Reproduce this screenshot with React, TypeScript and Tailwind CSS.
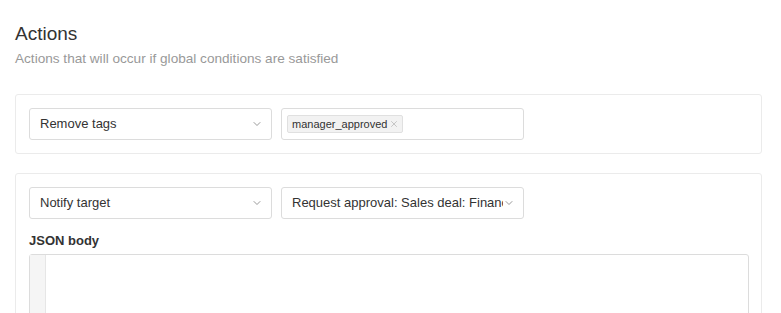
import { ChevronDown, X } from 'lucide-react'

function Select({ value }: { value: string }) {
  return (
    <div className="flex h-[32px] w-[243px] items-center rounded-[3px] border border-[#dcdcdc] bg-white pl-[10px] pr-[8px]">
      <span className="flex-1 overflow-hidden whitespace-nowrap text-[13px] text-[#333]">{value}</span>
      <ChevronDown className="h-3 w-3 shrink-0 text-[#777]" strokeWidth={1.5} />
    </div>
  )
}

export default function App() {
  return (
    <div className="h-[313px] w-[781px] overflow-hidden bg-white px-[15px] pt-[23px] font-['Liberation_Sans',Arial,sans-serif]">
      <h2 className="text-[19px] leading-[22px] text-[#333]">Actions</h2>
      <p className="mt-[6px] text-[13.6px] leading-[16px] text-[#999]">
        Actions that will occur if global conditions are satisfied
      </p>

      <div className="mt-[27px] flex w-[747px] gap-[9px] rounded-[3px] border border-[#ebebeb] p-[13px]">
        <Select value="Remove tags" />
        <div className="flex h-[32px] w-[243px] items-center rounded-[3px] border border-[#dcdcdc] bg-white px-[5px]">
          <span className="flex h-[18px] items-center gap-[2px] rounded-[2px] border border-[#e0e0e0] bg-[#f2f2f2] pl-[4px] pr-[3px] text-[11px] text-[#333]">
            manager_approved
            <X className="h-[10px] w-[10px] text-[#aaa]" strokeWidth={1.5} />
          </span>
        </div>
      </div>

      <div className="mt-[19px] w-[747px] rounded-[3px] border border-[#ebebeb] px-[13px] pt-[13px]">
        <div className="flex gap-[9px]">
          <Select value="Notify target" />
          <Select value="Request approval: Sales deal: Finance" />
        </div>
        <div className="mt-[14px] text-[13px] font-bold leading-[16px] text-[#333]">JSON body</div>
        <div className="mt-[5px] flex h-[80px] w-[720px] rounded-t-[3px] border border-[#dcdcdc]">
          <div className="w-[16px] border-r border-[#e6e6e6] bg-[#f5f5f5]" />
          <div className="flex-1" />
        </div>
      </div>
    </div>
  )
}
